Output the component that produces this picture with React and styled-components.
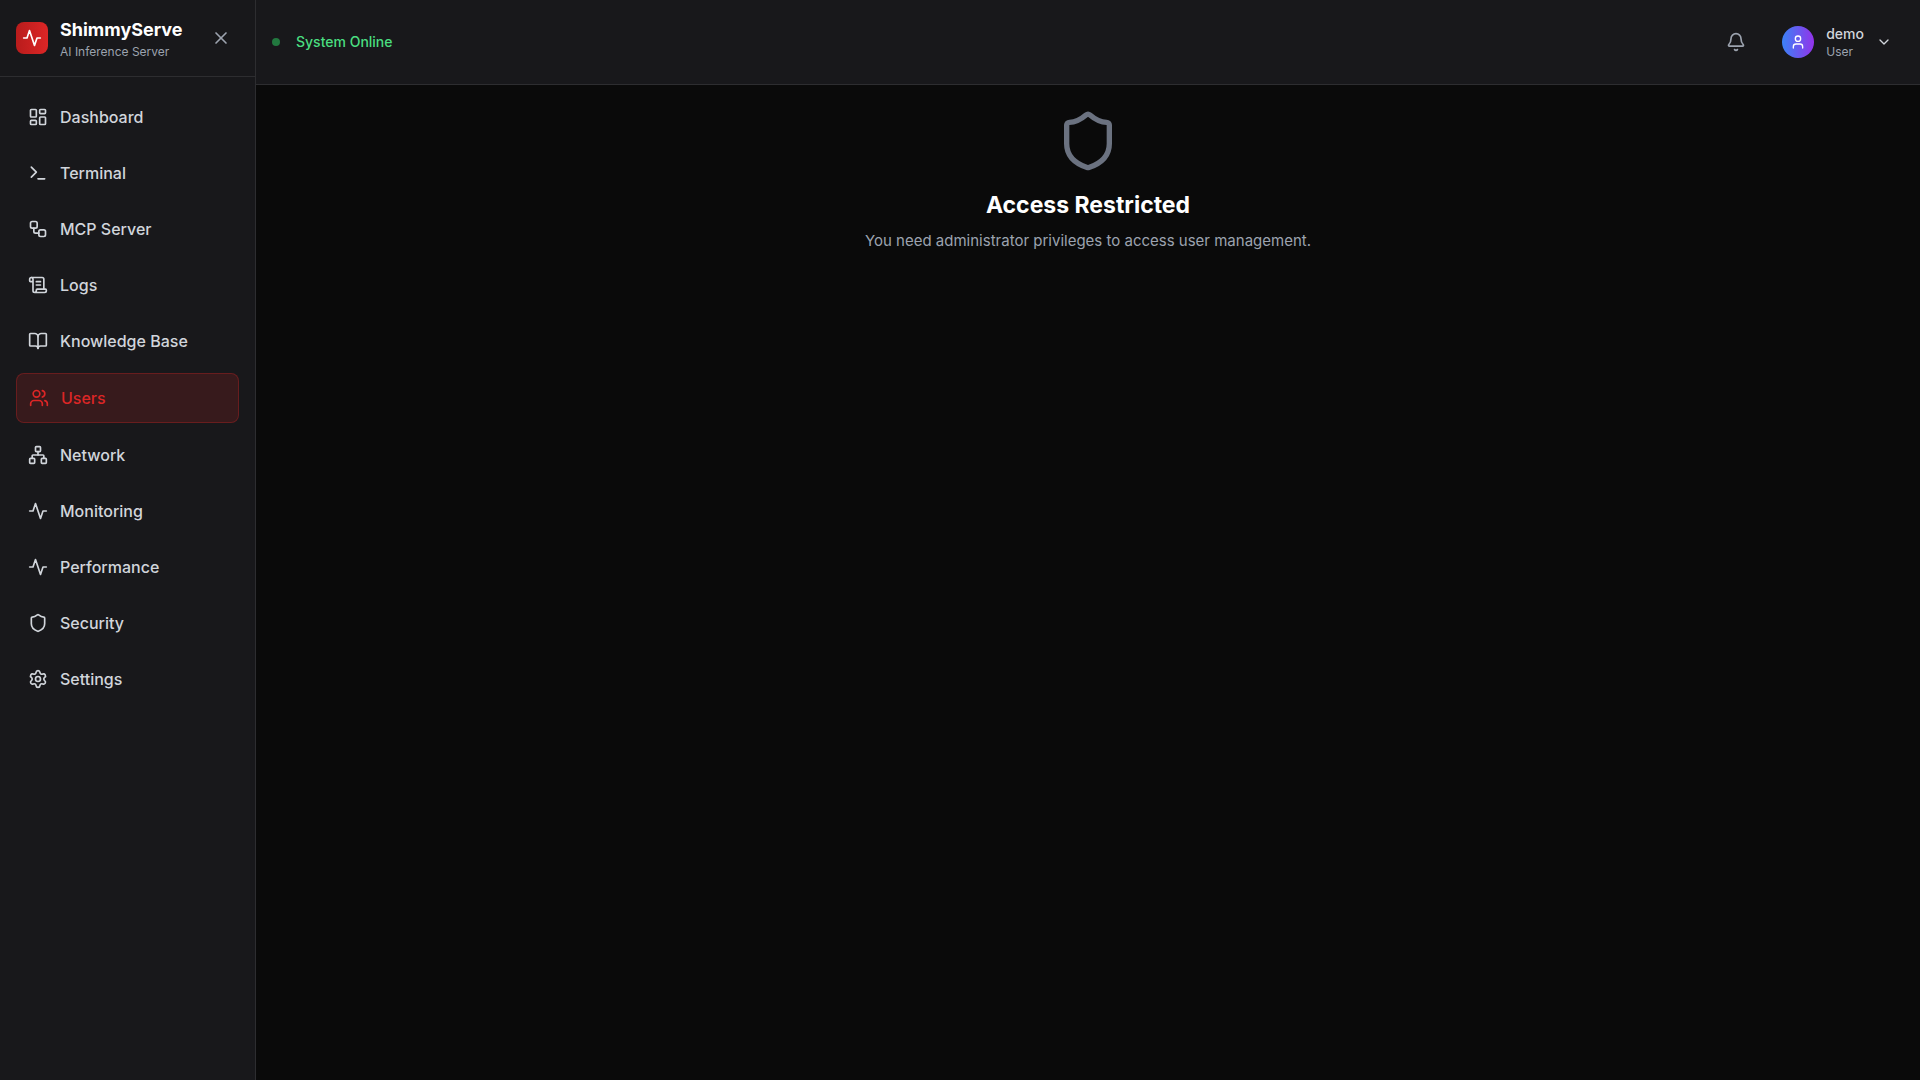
import React from "react";
import styled, { createGlobalStyle } from "styled-components";
import {
  Activity,
  Bell,
  BookOpen,
  ChevronDown,
  LayoutDashboard,
  Network,
  ScrollText,
  Settings,
  Shield,
  Terminal,
  User,
  Users,
  Workflow,
  X,
} from "lucide-react";

const GlobalStyle = createGlobalStyle`
  *, *::before, *::after { box-sizing: border-box; }
  body {
    margin: 0;
    background: #0a0a0a;
    color: #ffffff;
    font-family: Inter, "Liberation Sans", sans-serif;
    font-size: 16px;
    line-height: 24px;
    -webkit-font-smoothing: antialiased;
  }
  h1, h2, p, ul { margin: 0; padding: 0; }
  button { font: inherit; color: inherit; border: 0; background: none; cursor: pointer; }
  svg { display: block; flex-shrink: 0; }
`;

const Shell = styled.div`
  display: flex;
  min-height: 100vh;
`;

const Sidebar = styled.aside`
  flex: 0 0 256px;
  background: #18181b;
  border-right: 1px solid #2d2d30;
`;

const SidebarHeader = styled.div`
  display: flex;
  align-items: center;
  justify-content: space-between;
  padding: 16px;
  border-bottom: 1px solid #2d2d30;
`;

const Brand = styled.div`
  display: flex;
  align-items: center;
  gap: 12px;
`;

const Logo = styled.div`
  display: grid;
  place-items: center;
  width: 32px;
  height: 32px;
  border-radius: 8px;
  background: linear-gradient(to right, #b91c1c, #dc2626);
`;

const BrandName = styled.h1`
  font-size: 18px;
  line-height: 28px;
  font-weight: 700;
`;

const Caption = styled.p`
  font-size: 12px;
  line-height: 16px;
  color: #9ca3af;
`;

const IconButton = styled.button`
  display: grid;
  place-items: center;
  padding: 8px;
  border-radius: 8px;
  color: #9ca3af;
`;

const NavList = styled.ul`
  display: flex;
  flex-direction: column;
  gap: 8px;
  padding: 16px;
  list-style: none;
`;

const NavLink = styled.a`
  display: flex;
  align-items: center;
  gap: 12px;
  padding: 12px;
  border: ${({ $active }) => ($active ? "1px solid rgba(220, 38, 38, 0.3)" : "0")};
  border-radius: 8px;
  background: ${({ $active }) => ($active ? "rgba(220, 38, 38, 0.16)" : "transparent")};
  color: ${({ $active }) => ($active ? "#dc2626" : "#d1d5db")};
  font-weight: 500;
  text-decoration: none;
`;

const Content = styled.div`
  display: flex;
  flex: 1;
  flex-direction: column;
  min-width: 0;
`;

const TopBar = styled.header`
  display: flex;
  align-items: center;
  justify-content: space-between;
  padding: 16px;
  background: #18181b;
  border-bottom: 1px solid #2d2d30;
`;

const Group = styled.div`
  display: flex;
  align-items: center;
  gap: 16px;
`;

const StatusDot = styled.span`
  width: 8px;
  height: 8px;
  border-radius: 50%;
  background: #22783f;
`;

const StatusText = styled.span`
  font-size: 14px;
  line-height: 20px;
  font-weight: 500;
  color: #4ade80;
`;

const UserButton = styled.button`
  display: flex;
  align-items: center;
  gap: 12px;
  padding: 8px 12px;
  border-radius: 8px;
  color: #d1d5db;
  text-align: left;
`;

const Avatar = styled.span`
  display: grid;
  place-items: center;
  width: 32px;
  height: 32px;
  border-radius: 50%;
  background: linear-gradient(to right, #3b82f6, #9333ea);
  color: #ffffff;
`;

const UserName = styled.span`
  display: block;
  font-size: 14px;
  line-height: 20px;
  font-weight: 500;
`;

const UserRole = styled(Caption).attrs({ as: "span" })`
  display: block;
`;

const Main = styled.main`
  display: flex;
  flex-direction: column;
  align-items: center;
  padding: 24px;
  text-align: center;
`;

const Title = styled.h2`
  margin: 16px 0 8px;
  font-size: 23px;
  line-height: 32px;
  font-weight: 700;
`;

const Message = styled.p`
  font-size: 15px;
  color: #9ca3af;
`;

const NAV_ITEMS = [
  { label: "Dashboard", icon: LayoutDashboard },
  { label: "Terminal", icon: Terminal },
  { label: "MCP Server", icon: Workflow },
  { label: "Logs", icon: ScrollText },
  { label: "Knowledge Base", icon: BookOpen },
  { label: "Users", icon: Users },
  { label: "Network", icon: Network },
  { label: "Monitoring", icon: Activity },
  { label: "Performance", icon: Activity },
  { label: "Security", icon: Shield },
  { label: "Settings", icon: Settings },
];

// Straight-edged pulse line used in the brand mark and the activity entries.
function Pulse({ size }) {
  return (
    <svg
      width={size}
      height={size}
      viewBox="0 0 24 24"
      fill="none"
      stroke="currentColor"
      strokeWidth="2"
      strokeLinecap="round"
      strokeLinejoin="round"
      aria-hidden="true"
    >
      <path d="M22 12h-4l-3 9L9 3l-3 9H2" />
    </svg>
  );
}

export default function App() {
  const current = "Users";
  return (
    <>
      <GlobalStyle />
      <Shell>
        <Sidebar>
          <SidebarHeader>
            <Brand>
              <Logo>
                <Pulse size={20} />
              </Logo>
              <div>
                <BrandName>ShimmyServe</BrandName>
                <Caption>AI Inference Server</Caption>
              </div>
            </Brand>
            <IconButton type="button" aria-label="Close sidebar">
              <X size={20} />
            </IconButton>
          </SidebarHeader>
          <nav aria-label="Main">
            <NavList>
              {NAV_ITEMS.map(({ label, icon }) => {
                const Icon = icon === Activity ? Pulse : icon;
                return (
                  <li key={label}>
                    <NavLink
                      href={`#${label.toLowerCase().replace(" ", "-")}`}
                      $active={label === current}
                      aria-current={label === current ? "page" : undefined}
                    >
                      <Icon size={20} />
                      <span>{label}</span>
                    </NavLink>
                  </li>
                );
              })}
            </NavList>
          </nav>
        </Sidebar>
        <Content>
          <TopBar>
            <Group>
              <StatusDot />
              <StatusText>System Online</StatusText>
            </Group>
            <Group>
              <IconButton type="button" aria-label="Notifications">
                <Bell size={20} />
              </IconButton>
              <UserButton type="button" aria-haspopup="menu">
                <Avatar>
                  <User size={16} />
                </Avatar>
                <span>
                  <UserName>demo</UserName>
                  <UserRole>User</UserRole>
                </span>
                <ChevronDown size={16} />
              </UserButton>
            </Group>
          </TopBar>
          <Main>
            <Shield size={64} color="#6b7280" />
            <Title>Access Restricted</Title>
            <Message>You need administrator privileges to access user management.</Message>
          </Main>
        </Content>
      </Shell>
    </>
  );
}
